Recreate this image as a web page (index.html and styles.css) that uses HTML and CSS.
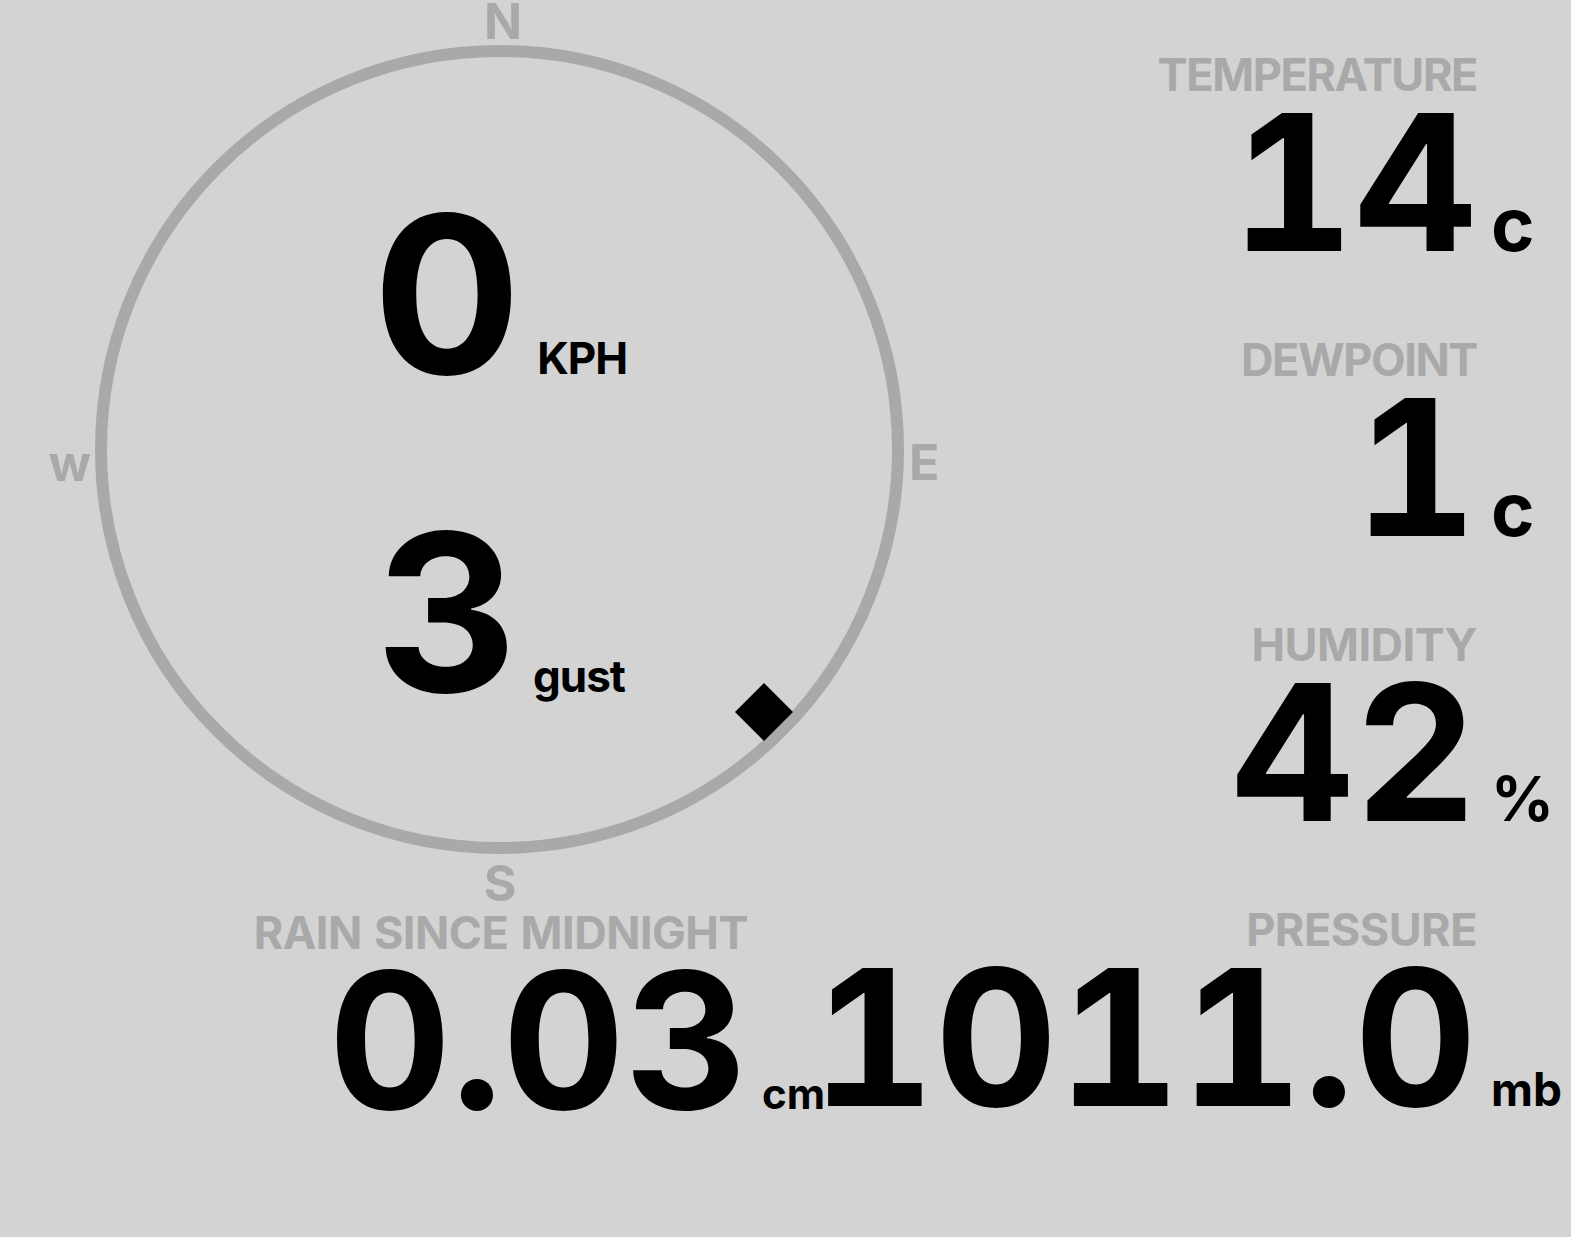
FILE: index.html
```html
<!DOCTYPE html>
<html lang="en">

<head>
    <meta charset="UTF-8">
    <meta name="viewport" content="width=device-width, initial-scale=1.0">
    <title>Weather Station</title>
    <link rel="stylesheet" href="styles.css">
</head>

<body>
    <main class="station">
        <section class="left-col">
            <div class="compass">
                <svg class="dial" width="1000" height="907" viewBox="0 0 1000 907">
                    <circle class="ring" cx="499.5" cy="449.5" r="398.5" />
                    <!-- wind direction marker -->
                    <rect class="pointer" x="-20.5" y="-20.5" width="41" height="41" transform="translate(764 712) rotate(45)" />
                    <text class="cardinal" x="503" y="39" text-anchor="middle">N</text>
                    <text class="cardinal" x="909" y="480">E</text>
                    <text class="cardinal" x="500" y="901" text-anchor="middle">S</text>
                    <text class="cardinal" x="91" y="481" text-anchor="end">w</text>
                </svg>
                <div class="wind">
                    <div class="wind-row">
                        <span class="wind-num">0</span>
                        <span class="wind-unit">KPH</span>
                    </div>
                    <div class="wind-row">
                        <span class="wind-num">3</span>
                        <span class="wind-unit">gust</span>
                    </div>
                </div>
            </div>
            <div class="stat rain">
                <div class="stat-label">RAIN SINCE MIDNIGHT</div>
                <div class="reading">
                    <span class="num">0.03</span>
                    <span class="unit unit-cm">cm</span>
                </div>
            </div>
        </section>

        <section class="right-col">
            <div class="stat">
                <div class="stat-label tight">TEMPERATURE</div>
                <div class="reading">
                    <span class="num">14</span>
                    <span class="unit unit-c">c</span>
                </div>
            </div>
            <div class="stat">
                <div class="stat-label tight">DEWPOINT</div>
                <div class="reading">
                    <span class="num">1</span>
                    <span class="unit unit-c">c</span>
                </div>
            </div>
            <div class="stat">
                <div class="stat-label">HUMIDITY</div>
                <div class="reading">
                    <span class="num">42</span>
                    <span class="unit unit-pct">%</span>
                </div>
            </div>
            <div class="stat">
                <div class="stat-label">PRESSURE</div>
                <div class="reading">
                    <span class="num">1011.0</span>
                    <span class="unit unit-mb">mb</span>
                </div>
            </div>
        </section>
    </main>
</body>

</html>
```

FILE: styles.css
```css
body {
    font-family: Inter, "Noto Sans", sans-serif;
    font-weight: bold;
    background-color: lightgray;
    color: black;
    margin: 0;
    padding: 0;
    overflow: hidden;
}

.station {
    display: grid;
    grid-template-columns: 1000px minmax(0, 1fr);
    height: 1237px;
}

.left-col,
.right-col {
    min-width: 0;
}

.compass {
    position: relative;
    height: 910px;
}

.dial {
    position: absolute;
    top: 0;
    left: 0;
}

.ring {
    fill: none;
    stroke: darkgray;
    stroke-width: 12;
}

.pointer {
    fill: black;
}

.cardinal {
    font-family: Inter, "Noto Sans", sans-serif;
    font-weight: bold;
    font-size: 50px;
    fill: darkgray;
}

.wind {
    position: relative;
    display: flex;
    flex-direction: column;
    align-items: center;
    gap: 98px;
    padding-top: 184px;
}

.wind-row {
    display: flex;
    align-items: baseline;
}

.wind-num {
    font-size: 220px;
    line-height: 220px;
}

.wind-unit {
    font-size: 44px;
    margin-left: 16px;
    letter-spacing: -1px;
}

.right-col {
    display: grid;
    grid-auto-rows: 285px;
    padding-top: 52px;
}

.stat {
    min-width: 0;
}

.stat-label {
    font-size: 45px;
    line-height: 45px;
    color: darkgray;
    text-align: right;
    padding-right: 94px;
    white-space: nowrap;
    letter-spacing: -0.5px;
}

.stat-label.tight {
    letter-spacing: -1.4px;
}

.rain .stat-label {
    word-spacing: 2px;
}

.reading {
    display: flex;
    justify-content: flex-end;
    align-items: baseline;
    margin-top: 5px;
}

.num {
    font-size: 190px;
    line-height: 160px;
    font-variant-numeric: tabular-nums;
    white-space: nowrap;
}

.unit {
    width: 94px;
    flex-shrink: 0;
    box-sizing: border-box;
    padding-left: 14px;
}

.unit-c {
    font-size: 74px;
}

.unit-pct {
    font-size: 62px;
}

.unit-mb {
    font-size: 46px;
}

.unit-cm {
    font-size: 42px;
}

.rain {
    width: 842px;
}
```
